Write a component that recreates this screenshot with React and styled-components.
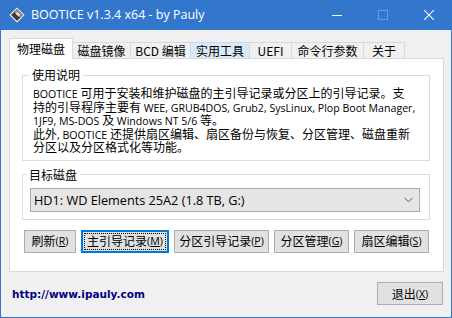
import React from 'react';
import styled, { createGlobalStyle } from 'styled-components';

const GlobalStyle = createGlobalStyle`
  html, body { margin: 0; padding: 0; background: #f0f0f0; }
  body {
    font-family: "Noto Sans CJK SC", "Liberation Sans", sans-serif;
    font-size: 12px;
    color: #000;
  }
  * { box-sizing: border-box; }
`;

const Window = styled.div`
  width: 452px;
  height: 318px;
  display: flex;
  flex-direction: column;
`;

const TitleBar = styled.div`
  height: 30px;
  background: #3377cc;
  display: flex;
  align-items: center;
  color: #fff;
`;

const AppIcon = styled.div`
  width: 16px;
  height: 16px;
  margin: 0 6px 0 9px;
  display: flex;
`;

const Title = styled.div`
  flex: 1;
  font-family: "Open Sans", sans-serif;
  font-size: 12.5px;
  line-height: 16px;
  white-space: nowrap;
`;

const Control = styled.div`
  width: 46px;
  height: 30px;
  display: flex;
  align-items: center;
  justify-content: center;
`;

const Body = styled.div`
  flex: 1;
  background: #f0f0f0;
  border: 1px solid #3377cc;
  border-top: none;
  padding: 8px 7px 0 8px;
  display: flex;
  flex-direction: column;
`;

const TabRow = styled.div`
  display: flex;
  height: 21px;
  margin-bottom: -1px;
  position: relative;
  z-index: 1;
`;

const Tab = styled.div`
  width: ${(p) => p.$w}px;
  margin-left: ${(p) => (p.$first ? 0 : -1)}px;
  height: ${(p) => (p.$active ? 21 : 16)}px;
  margin-top: ${(p) => (p.$active ? 0 : 4)}px;
  background: ${(p) => (p.$active ? '#fff' : p.$hover ? '#d8eaf9' : '#f0f0f0')};
  border: 1px solid ${(p) => (p.$hover ? '#c3dcf3' : '#d9d9d9')};
  border-bottom: none;
  display: flex;
  align-items: center;
  justify-content: center;
  line-height: 14px;
  white-space: nowrap;
  position: relative;
  z-index: ${(p) => (p.$active ? 2 : 1)};
  padding-top: ${(p) => (p.$active ? 0 : 1)}px;
`;

const Panel = styled.div`
  height: 214px;
  background: #fff;
  border: 1px solid #d9d9d9;
  padding: 9px 13px 0 12px;
`;

const Group = styled.fieldset`
  margin: 0;
  margin-top: ${(p) => p.$mt || 0}px;
  min-width: 0;
  border: 1px solid #dcdcdc;
  padding: ${(p) => p.$pad};
`;

const Legend = styled.legend`
  padding: 0 3px;
  margin-left: -4px;
  line-height: 14px;
`;

const Desc = styled.div`
  line-height: 13.5px;
  height: 13.5px;
  white-space: nowrap;
`;

const Latin = styled.span`
  font-family: "Open Sans", sans-serif;
  font-size: 10.6px;
`;

const Combo = styled.div`
  height: 24px;
  background: #e5e5e5;
  border: 1px solid #acacac;
  display: flex;
  align-items: center;
  justify-content: space-between;
  padding: 0 6px 0 3px;
  line-height: 14px;
`;

const ComboText = styled.span`
  font-family: "Open Sans", sans-serif;
  font-size: 12.7px;
`;

const ButtonRow = styled.div`
  display: flex;
  gap: 5px;
  margin: 10px 0 0 2px;
`;

const Button = styled.div`
  width: ${(p) => p.$w}px;
  height: 23px;
  background: #e1e1e1;
  border: ${(p) => (p.$focus ? '2px solid #0078d7' : '1px solid #adadad')};
  display: flex;
  align-items: center;
  justify-content: center;
  line-height: 14px;
  white-space: nowrap;
  outline: ${(p) => (p.$focus ? '1px dotted #000' : 'none')};
  outline-offset: -4px;
`;

const Key = styled.span`
  font-family: "Open Sans", sans-serif;
  font-size: 10.6px;
`;

const Footer = styled.div`
  display: flex;
  align-items: center;
  justify-content: space-between;
  margin: 10px 1px 0 3px;
`;

const Link = styled.div`
  font-family: "DejaVu Sans", sans-serif;
  font-weight: bold;
  font-size: 10.5px;
  color: #000080;
`;

const tabs = [
  { label: '物理磁盘', w: 64, active: true },
  { label: '磁盘镜像', w: 59 },
  { label: 'BCD 编辑', w: 61 },
  { label: '实用工具', w: 60, hover: true },
  { label: 'UEFI', w: 43 },
  { label: '命令行参数', w: 73 },
  { label: '关于', w: 42 },
];

const buttons = [
  { label: '刷新', key: 'R', w: 52 },
  { label: '主引导记录', key: 'M', w: 88, focus: true },
  { label: '分区引导记录', key: 'P', w: 95 },
  { label: '分区管理', key: 'G', w: 75 },
  { label: '扇区编辑', key: 'S', w: 75 },
];

const Logo = () => (
  <svg width="16" height="16" viewBox="0 0 16 16">
    <polygon points="8,0.5 15.5,8 8,15.5 0.5,8" fill="#fff" />
    <polygon points="8,2 14,8 8,14 2,8" fill="#3a3a3a" />
    <polygon points="5,5 8,2 14,8 11,11" fill="#8c8c8c" />
    <polygon points="6.5,6.5 8,5 11,8 9.5,9.5" fill="#e6e6e6" />
  </svg>
);

export default function App() {
  return (
    <>
      <GlobalStyle />
      <Window>
        <TitleBar>
          <AppIcon>
            <Logo />
          </AppIcon>
          <Title>BOOTICE v1.3.4 x64 - by Pauly</Title>
          <Control>
            <svg width="10" height="10" viewBox="0 0 10 10">
              <line x1="0" y1="5.5" x2="10" y2="5.5" stroke="#fff" strokeWidth="1" />
            </svg>
          </Control>
          <Control>
            <svg width="10" height="10" viewBox="0 0 10 10">
              <rect x="0.5" y="0.5" width="9" height="9" fill="none" stroke="#6c9cdb" strokeWidth="1" />
            </svg>
          </Control>
          <Control>
            <svg width="10" height="10" viewBox="0 0 10 10">
              <path d="M0 0 L10 10 M10 0 L0 10" stroke="#fff" strokeWidth="1.1" />
            </svg>
          </Control>
        </TitleBar>
        <Body>
          <TabRow>
            {tabs.map((t, i) => (
              <Tab key={t.label} $w={t.w} $first={i === 0} $active={t.active} $hover={t.hover}>
                {t.label}
              </Tab>
            ))}
          </TabRow>
          <Panel>
            <Group $pad="4px 10px 6px 10px">
              <Legend>使用说明</Legend>
              <Desc><Latin>BOOTICE </Latin>可用于安装和维护磁盘的主引导记录或分区上的引导记录。支</Desc>
              <Desc>持的引导程序主要有 <Latin>WEE, GRUB4DOS, Grub2, SysLinux, Plop Boot Manager,</Latin></Desc>
              <Desc><Latin>1JF9, MS-DOS </Latin>及 <Latin>Windows NT 5/6 </Latin>等。</Desc>
              <Desc>此外<Latin>, BOOTICE </Latin>还提供扇区编辑、扇区备份与恢复、分区管理、磁盘重新</Desc>
              <Desc>分区以及分区格式化等功能。</Desc>
            </Group>
            <Group $mt={7} $pad="6px 9px 7px 7px">
              <Legend>目标磁盘</Legend>
              <Combo>
                <ComboText>HD1: WD Elements 25A2 (1.8 TB, G:)</ComboText>
                <svg width="9" height="6" viewBox="0 0 9 6">
                  <path d="M0.5 0.8 L4.5 4.8 L8.5 0.8" fill="none" stroke="#555" strokeWidth="1" />
                </svg>
              </Combo>
            </Group>
            <ButtonRow>
              {buttons.map((b) => (
                <Button key={b.key} $w={b.w} $focus={b.focus}>
                  {b.label}<Key>(<u>{b.key}</u>)</Key>
                </Button>
              ))}
            </ButtonRow>
          </Panel>
          <Footer>
            <Link>http://www.ipauly.com</Link>
            <Button $w={66}>
              退出<Key>(<u>X</u>)</Key>
            </Button>
          </Footer>
        </Body>
      </Window>
    </>
  );
}
